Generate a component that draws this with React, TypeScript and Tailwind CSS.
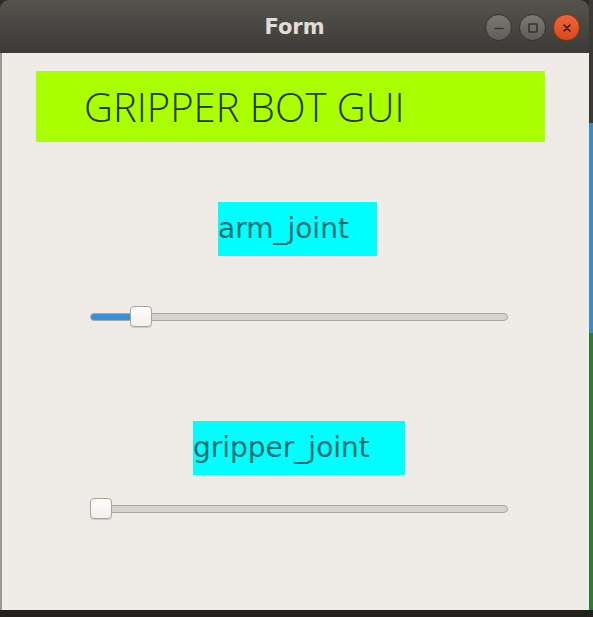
import React from "react";

function TitleButton({ kind }: { kind: "min" | "max" | "close" }) {
  if (kind === "close") {
    return (
      <div className="w-[27px] h-[27px] rounded-full bg-gradient-to-b from-[#f0643a] to-[#d94a1a] border border-[#8a3414] flex items-center justify-center">
        <svg width="12" height="12" viewBox="0 0 12 12">
          <path d="M3 3 L9 9 M9 3 L3 9" stroke="#3b1a0c" strokeWidth="1.6" strokeLinecap="round" />
        </svg>
      </div>
    );
  }
  return (
    <div className="w-[27px] h-[27px] rounded-full bg-gradient-to-b from-[#7b7973] to-[#5f5d58] border border-[#33322f] flex items-center justify-center">
      {kind === "min" ? (
        <svg width="12" height="12" viewBox="0 0 12 12">
          <path d="M2 6.5 H10" stroke="#35342f" strokeWidth="1.6" strokeLinecap="round" />
        </svg>
      ) : (
        <svg width="12" height="12" viewBox="0 0 12 12">
          <rect x="2" y="2" width="8" height="8" fill="none" stroke="#35342f" strokeWidth="1.6" rx="0.5" />
        </svg>
      )}
    </div>
  );
}

function Slider({ pct, ml, mt }: { pct: number; ml: string; mt: string }) {
  return (
    <div className={`${ml} ${mt} w-[418px] h-[21px] relative flex items-center`}>
      <div className="w-full h-[8px] rounded-full bg-[#d6d2cc] border border-[#aaa59e] overflow-hidden">
        <div className="h-full bg-[#3d8fd6] border-r border-[#2a6ea8]" style={{ width: `${pct}%` }} />
      </div>
      <div
        className="absolute top-0 w-[22px] h-[21px] rounded-[4px] bg-gradient-to-b from-[#ffffff] to-[#f0eeeb] border border-[#a8a49d] shadow-[0_1px_1px_rgba(0,0,0,0.15)]"
        style={{ left: `calc(${pct}% - ${pct === 0 ? 0 : 6}px)` }}
      />
    </div>
  );
}

export default function App() {
  return (
    <div className="w-[593px] h-[617px] bg-[#2b2a28] flex flex-col overflow-hidden">
      <div className="flex h-[610px]">
        <div className="w-[589px] h-[610px] flex flex-col rounded-t-[9px] overflow-hidden">
          <div className="h-[53px] bg-gradient-to-b from-[#56534d] to-[#3c3b37] flex items-center relative pt-[3px]">
            <div
              className="w-full text-center text-[21px] font-bold text-[#e0ddd5]"
              style={{ fontFamily: '"DejaVu Sans", sans-serif' }}
            >
              Form
            </div>
            <div className="absolute right-[9px] top-[14px] flex gap-[7px]">
              <TitleButton kind="min" />
              <TitleButton kind="max" />
              <TitleButton kind="close" />
            </div>
          </div>
          <div className="flex-1 bg-[#efebe7] border-l-2 border-[#9a9893] flex flex-col items-start">
            <div className="ml-[34px] mt-[18px] w-[509px] h-[71px] bg-[#aaff00] flex items-center pl-[48px]">
              <span
                className="text-[40px] font-light text-[#223600] leading-none"
                style={{ fontFamily: '"Open Sans", sans-serif' }}
              >
                GRIPPER BOT GUI
              </span>
            </div>
            <div className="ml-[216px] mt-[60px] w-[159px] h-[54px] bg-[#00ffff] flex items-center">
              <span
                className="text-[28px] leading-none text-[#0a6e6e]"
                style={{ fontFamily: '"DejaVu Sans", sans-serif' }}
              >
                arm_joint
              </span>
            </div>
            <Slider pct={11} ml="ml-[88px]" mt="mt-[50px]" />
            <div className="ml-[191px] mt-[94px] w-[212px] h-[54px] bg-[#00ffff] flex items-center">
              <span
                className="text-[28px] leading-none text-[#0a6e6e]"
                style={{ fontFamily: '"DejaVu Sans", sans-serif' }}
              >
                gripper_joint
              </span>
            </div>
            <Slider pct={0} ml="ml-[88px]" mt="mt-[23px]" />
          </div>
        </div>
        <div className="w-[4px] flex flex-col">
          <div className="h-[123px] bg-[#3a3936]" />
          <div className="h-[210px] bg-[#3a8cc4]" />
          <div className="flex-1 bg-[#2f7a35]" />
        </div>
      </div>
      <div className="h-[7px] bg-[#222120]" />
    </div>
  );
}
